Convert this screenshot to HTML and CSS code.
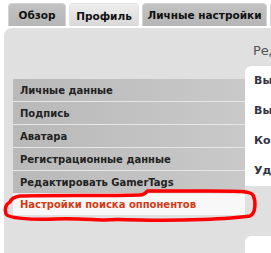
FILE: index.html
```html
<!DOCTYPE html>
<html>
<head>
<meta charset="utf-8">
<link rel="stylesheet" href="styles.css">
</head>
<body>
<div class="tabs">
  <div class="tab tab-overview">Обзор</div>
  <div class="tab tab-profile active">Профиль</div>
  <div class="tab tab-personal">Личные настройки</div>
  <div class="tab stub"></div>
</div>
<div class="panel">
  <div class="side">
    <ul class="menu">
      <li class="item">Личные данные</li>
      <li class="item">Подпись</li>
      <li class="item">Аватара</li>
      <li class="item">Регистрационные данные</li>
      <li class="item">Редактировать GamerTags</li>
      <li class="item current">Настройки поиска оппонентов</li>
    </ul>
  </div>
  <div class="main">
    <div class="heading">Редактирование профиля</div>
    <div class="box">
      <div class="row">Выбор</div>
      <div class="row">Выбор</div>
      <div class="row">Контакты</div>
      <div class="row">Удалить</div>
    </div>
    <div class="box2"></div>
  </div>
  <svg class="circle" width="271" height="40" viewBox="0 0 271 40">
    <path d="M10 13 C 6 15, 4 20, 6 25 C 8 29, 30 31, 55 30 C 75 29, 95 31, 105 31 C 112 30, 115 30, 140 31 C 180 32, 230 30, 250 27 C 256 24, 256 12, 253 6 C 250 2, 240 2, 210 2 L 148 2 C 145 3, 146 6, 140 6 C 110 7, 40 6, 20 7 C 14 8, 11 10, 10 13 Z" fill="none" stroke="#ff0000" stroke-width="3.5" stroke-linejoin="round"/>
  </svg>
</div>
</body>
</html>
```
FILE: styles.css
```css
html, body {
  margin: 0;
  padding: 0;
  background: #ffffff;
  width: 271px;
  height: 253px;
  overflow: hidden;
}
body {
  font-family: "DejaVu Sans", Verdana, sans-serif;
}
.tabs {
  display: flex;
  gap: 3px;
  padding: 3px 0 0 8px;
  height: 23px;
  overflow: hidden;
}
.tab {
  flex: none;
  height: 23px;
  box-sizing: border-box;
  display: flex;
  align-items: center;
  justify-content: center;
  font-size: 10.5px;
  font-weight: bold;
  color: #111;
  background: linear-gradient(#c2c2c2, #b6b6b6);
  border: 1px solid #d4d4d4;
  border-bottom: none;
  border-radius: 4px 4px 0 0;
  white-space: nowrap;
}
.tab-overview { width: 58px; }
.tab-profile { width: 70px; }
.tab-personal { width: 125px; }
.tab.active {
  background: linear-gradient(#eeeeee, #d6d6d6);
  height: 25px;
  border-color: #e4e4e4;
}
.tab.stub {
  width: 4px;
}
.panel {
  position: relative;
  margin: 2px 0 0 4px;
  background: #e0e0e0;
  border-top-left-radius: 8px;
  height: 225px;
  display: flex;
}
.side {
  width: 241px;
  padding: 51px 0 0 9px;
  box-sizing: border-box;
}
.menu {
  list-style: none;
  margin: 0;
  padding: 0;
}
.item {
  height: 22px;
  border-bottom: 1px solid #e6e6e6;
  background: linear-gradient(90deg, #b9b9b9, #c9c9c9);
  padding-left: 7px;
  display: flex;
  align-items: center;
  font-size: 10px;
  font-weight: bold;
  color: #222;
  white-space: nowrap;
}
.item.current {
  background: #f8f8f8;
  color: #d33a14;
  border-bottom: none;
  height: 21px;
}
.main {
  flex: 1;
  display: flex;
  flex-direction: column;
  overflow: hidden;
}
.heading {
  height: 42px;
  padding: 15px 0 0 8px;
  box-sizing: border-box;
  font-size: 13px;
  color: #555;
  white-space: nowrap;
}
.box {
  background: #ffffff;
  border-top-left-radius: 6px;
  height: 123px;
  padding: 0 0 0 9px;
  box-sizing: border-box;
}
.row {
  height: 30px;
  display: flex;
  align-items: center;
  font-size: 11px;
  font-weight: bold;
  color: #333344;
  white-space: nowrap;
}
.box2 {
  margin-top: 50px;
  background: #ffffff;
  border-top-left-radius: 6px;
  height: 20px;
}
.circle {
  position: absolute;
  left: -4px;
  top: 161px;
}
```
